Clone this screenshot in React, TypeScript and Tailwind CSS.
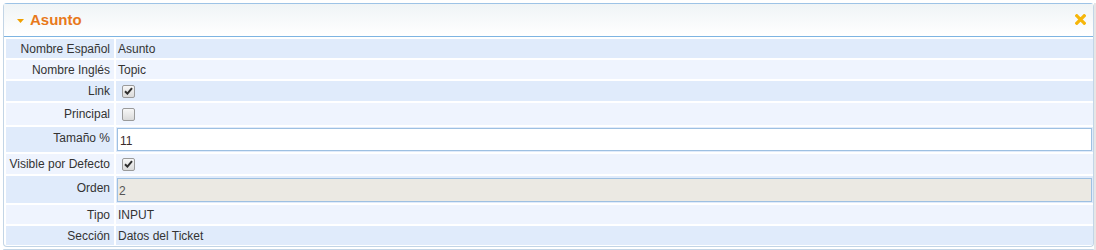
import React from "react";

type Field = {
  label: string;
  kind: "text" | "check" | "input" | "disabled";
  value?: string;
  checked?: boolean;
  h: string;
  tone: "dark" | "light";
};

const fields: Field[] = [
  { label: "Nombre Español", kind: "text", value: "Asunto", h: "h-[19px]", tone: "dark" },
  { label: "Nombre Inglés", kind: "text", value: "Topic", h: "h-[19px]", tone: "light" },
  { label: "Link", kind: "check", checked: true, h: "h-[20px]", tone: "dark" },
  { label: "Principal", kind: "check", checked: false, h: "h-[22px]", tone: "light" },
  { label: "Tamaño %", kind: "input", value: "11", h: "h-[25px]", tone: "dark" },
  { label: "Visible por Defecto", kind: "check", checked: true, h: "h-[20px]", tone: "light" },
  { label: "Orden", kind: "disabled", value: "2", h: "h-[27px]", tone: "dark" },
  { label: "Tipo", kind: "text", value: "INPUT", h: "h-[19px]", tone: "light" },
  { label: "Sección", kind: "text", value: "Datos del Ticket", h: "h-[19px]", tone: "dark" },
];

const Check = ({ checked }: { checked?: boolean }) => (
  <span className="ml-[6px] flex h-[13px] w-[13px] items-center justify-center rounded-[2px] border border-[#9a9a9a] bg-gradient-to-b from-[#f7f7f7] to-[#dadada]">
    {checked ? (
      <svg width="9" height="8" viewBox="0 0 9 8">
        <path d="M1 4.2 L3.4 6.6 L8 1.2" fill="none" stroke="#2e2e2e" strokeWidth="2" />
      </svg>
    ) : null}
  </span>
);

const Value = ({ f }: { f: Field }) => {
  if (f.kind === "check") return <Check checked={f.checked} />;
  if (f.kind === "input")
    return (
      <div className="mx-[1px] flex h-[23px] flex-1 items-center border border-[#9ec0e2] bg-white pl-[2px] pt-[2px] text-[12px] text-[#3a2a2a]">
        {f.value}
      </div>
    );
  if (f.kind === "disabled")
    return (
      <div className="mx-[1px] flex h-[24px] flex-1 items-center border border-[#9ec0e2] bg-[#ebe9e3] pl-[1px] pt-[3px] text-[12px] text-[#555]">
        {f.value}
      </div>
    );
  return <span className="pl-[2px] text-[12px] text-[#333]">{f.value}</span>;
};

export default function App() {
  return (
    <div className="flex h-[250px] w-[1096px] bg-white pl-[3px] pt-[3px] font-['Liberation_Sans',Arial,sans-serif]">
      <div className="flex w-[1091px] flex-col">
        <div className="flex h-[244px] shrink-0 flex-col rounded-[4px] border border-[#c3d5e6] border-t-[#9dc3e6] pb-[1px]">
          <div className="flex h-[33px] shrink-0 items-center justify-between border-b border-[#7db4e2] bg-gradient-to-b from-[#eff4f6] to-[#ffffff] pl-[13px] pr-[7px]">
            <div className="flex items-center">
              <svg width="7" height="4" viewBox="0 0 7 4" className="mt-[1px]">
                <path d="M0 0 H7 L3.5 4 Z" fill="#f0a000" />
              </svg>
              <span className="ml-[6px] text-[15px] font-bold text-[#e8791c]">Asunto</span>
            </div>
            <svg width="11" height="11" viewBox="0 0 11 11" className="mb-[1px]">
              <path d="M1.8 1.8 L9.2 9.2 M9.2 1.8 L1.8 9.2" stroke="#f6b60a" strokeWidth="3.2" strokeLinecap="square" />
            </svg>
          </div>
          <div className="grid shrink-0 grid-cols-[108px_1fr] gap-[2px] pl-[2px] pt-[2px]">
            {fields.map((f) => {
              const bg = f.tone === "dark" ? "bg-[#e0ebfb]" : "bg-[#eff4fe]";
              const lift = f.kind === "input" || f.kind === "disabled" ? "pb-[3px]" : "";
              return (
                <React.Fragment key={f.label}>
                  <div className={`${f.h} ${bg} ${lift} flex items-center justify-end pr-[4px] text-[12px] text-[#333]`}>
                    {f.label}
                  </div>
                  <div className={`${f.h} ${bg} flex items-center`}>
                    <Value f={f} />
                  </div>
                </React.Fragment>
              );
            })}
          </div>
        </div>
        <div className="mt-[2px] h-[1px] shrink-0 rounded-t-[4px] border-t border-[#c3d5e6]" />
      </div>
      <div className="h-[250px] w-[2px] shrink-0 bg-[#e6e6e6]" />
    </div>
  );
}
